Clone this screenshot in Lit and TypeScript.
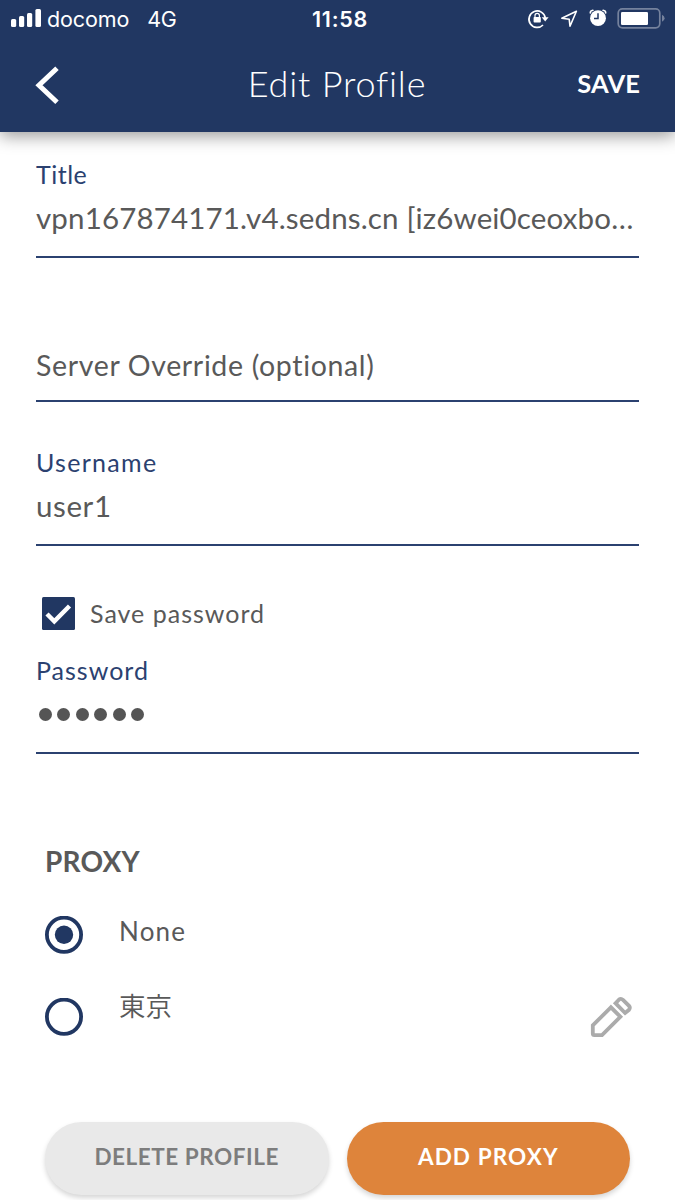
import { LitElement, html, css, svg } from "lit";
import { customElement, property } from "lit/decorators.js";

@customElement("status-bar")
class StatusBar extends LitElement {
  static styles = css`
    :host { display: grid; grid-template-columns: 1fr auto 1fr; align-items: center; height: 37px; padding: 0 10px 0 11px; color: #fff; font: 400 21.5px/26px Inter, sans-serif; }
    .left { display: flex; align-items: center; }
    .bars { width: 31px; height: 19px; margin-right: 5px; }
    .carrier { letter-spacing: -0.1px; margin-right: 18px; }
    .net { letter-spacing: -0.4px; }
    .time { font-weight: 600; letter-spacing: 0.75px; padding-left: 4px; }
    .right { display: flex; justify-content: flex-end; }
    .icons { width: 140px; height: 37px; }
  `;
  render() {
    return html`
      <div class="left">
        <svg class="bars" viewBox="0 0 31 19" fill="#fff">
          <rect x="0" y="10" width="5.2" height="8" rx="1.5" />
          <rect x="8" y="7" width="5.2" height="11" rx="1.5" />
          <rect x="16" y="4" width="5.2" height="14" rx="1.5" />
          <rect x="24.4" y="0" width="5.6" height="18" rx="1.5" />
        </svg>
        <span class="carrier">docomo</span><span class="net">4G</span>
      </div>
      <div class="time">11:58</div>
      <div class="right">
        <svg class="icons" viewBox="525 0 140 37" fill="none" stroke="#fff">
          <path d="M543 25A8.2 8.2 0 1 1 545.3 18" stroke-width="1.7" />
          <path d="M541.7 17.3h6.9l-3.4 4.2z" fill="#fff" stroke="none" />
          <rect x="533.6" y="17" width="7.2" height="5.6" rx="0.8" fill="#fff" stroke="none" />
          <path d="M535 17.4v-1.9a2.2 2.2 0 0 1 4.4 0v1.9" stroke-width="1.2" />
          <path d="M576.4 11.3L561.8 18.2L569.2 19.2L570 26.2Z" stroke-width="1.6" stroke-linejoin="round" />
          <circle cx="598" cy="18.2" r="7.9" fill="#fff" stroke="none" />
          <path d="M598 13.2v5.2h-4" stroke="#213762" stroke-width="1.5" />
          <path d="M590.3 12.9q0-2.2 2.6-2.6M605.7 12.9q0-2.2-2.6-2.6" stroke-width="1.6" stroke-linecap="round" />
          <rect x="618.2" y="8.8" width="41.6" height="19" rx="4.2" stroke="#75829d" stroke-width="1.7" />
          <rect x="621" y="12" width="27" height="13" rx="1.3" fill="#fff" stroke="none" />
          <path d="M662 14.8q2.6 1 2.6 3.5t-2.6 3.5z" fill="#75829d" stroke="none" />
        </svg>
      </div>
    `;
  }
}

@customElement("form-field")
class FormField extends LitElement {
  @property() label = "";
  @property() value = "";
  @property() placeholder = "";
  @property({ type: Number }) dots = 0;
  static styles = css`
    :host { display: flex; flex-direction: column; justify-content: flex-end; box-sizing: border-box; border-bottom: 2px solid #2b4170; padding-bottom: 18px; color: #595959; }
    .label { color: #2b4170; font-size: 25px; line-height: 30px; letter-spacing: var(--label-track, 0.5px); margin-bottom: 9px; }
    .value { font-size: 29.5px; line-height: 40px; white-space: nowrap; letter-spacing: var(--track, 0px); }
    .placeholder { font-size: 28.5px; line-height: 40px; letter-spacing: 0.65px; margin-bottom: -3px; }
    .dots { display: flex; align-items: center; gap: 5.4px; height: 40px; padding-left: 3px; }
    .dot { width: 13px; height: 13px; border-radius: 50%; background: #555; }
  `;
  render() {
    return html`
      ${this.label ? html`<div class="label">${this.label}</div>` : ""}
      ${this.placeholder ? html`<div class="placeholder">${this.placeholder}</div>` : ""}
      ${this.value ? html`<div class="value">${this.value}</div>` : ""}
      ${this.dots ? html`<div class="dots">${Array.from({ length: this.dots }, () => html`<span class="dot"></span>`)}</div>` : ""}
    `;
  }
}

@customElement("app-root")
class AppRoot extends LitElement {
  static styles = css`
    :host { display: block; height: 1200px; overflow: hidden; background: #fff; color: #595959; font-family: Lato, "Noto Sans CJK JP", sans-serif; }
    .header { height: 132px; background: #213762; box-shadow: 0 4px 16px rgba(0, 0, 0, 0.4); color: #fff; }
    .nav { display: grid; grid-template-columns: 1fr auto 1fr; align-items: center; height: 95px; padding: 0 35px 0 34px; }
    .back { width: 26px; height: 40px; }
    .title { font-size: 36px; line-height: 44px; font-weight: 300; letter-spacing: 0.8px; padding-bottom: 3px; }
    .save { justify-self: end; font-size: 25.5px; font-weight: 700; padding-bottom: 3px; letter-spacing: 0.1px; }
    .form { padding: 0 36px; }
    .first { height: 126px; --track: 0.15px; }
    .field { height: 144px; }
    .user { --track: 0.6px; --label-track: 1.3px; }
    .remember { display: flex; align-items: center; gap: 15px; height: 33px; margin-top: 51px; padding-left: 6px; font-size: 25px; letter-spacing: 1px; }
    .remember span { padding-bottom: 2px; }
    .check { width: 33px; height: 33px; }
    .password { height: 124px; --label-track: 1px; }
    .proxy { padding: 0 45px; }
    .heading { margin: 89px 0 0; font-size: 28px; line-height: 36px; font-weight: 700; letter-spacing: 0.2px; }
    .row { display: flex; align-items: center; height: 82px; font-size: 26px; }
    .heading + .row { margin-top: 15px; }
    .radio { width: 38px; height: 38px; margin-right: 36px; }
    .name { flex: 1; line-height: 34px; padding-bottom: 9px; letter-spacing: 1.2px; }
    .cjk { font: 350 26.5px/34px "Noto Sans CJK JP", sans-serif; padding-bottom: 24px; letter-spacing: 0; }
    .pencil { width: 44px; height: 44px; margin-right: -2px; }
    .actions { display: grid; grid-template-columns: 1fr 1fr; gap: 18px; padding: 64px 45px 0; }
    .btn { height: 73px; border: 0; border-radius: 37px; font: 700 22.5px/30px Lato, sans-serif; box-shadow: 0 3px 5px rgba(0, 0, 0, 0.16); padding: 0 0 3px; }
    .delete { background: #e9e9e9; color: #7d7d7d; letter-spacing: 0.55px; }
    .add { background: #de843b; color: #fff; letter-spacing: 1.1px; }
  `;
  radio(on: boolean) {
    return html`<svg class="radio" viewBox="0 0 38 38">
      <circle cx="19" cy="18.7" r="17.1" fill="none" stroke="#213762" stroke-width="3.8" />
      ${on ? svg`<circle cx="19" cy="18.7" r="9.2" fill="#213762" />` : ""}
    </svg>`;
  }
  render() {
    return html`
      <div class="header">
        <status-bar></status-bar>
        <div class="nav">
          <svg class="back" viewBox="0 0 26 40"><path d="M23 3.3L5 20.3L23 37.3" fill="none" stroke="#fff" stroke-width="5" /></svg>
          <div class="title">Edit Profile</div>
          <div class="save">SAVE</div>
        </div>
      </div>
      <div class="form">
        <form-field class="first" label="Title" value="vpn167874171.v4.sedns.cn [iz6wei0ceoxbo…"></form-field>
        <form-field class="field" placeholder="Server Override (optional)"></form-field>
        <form-field class="field user" label="Username" value="user1"></form-field>
        <div class="remember">
          <svg class="check" viewBox="0 0 33 33"><rect width="33" height="33" rx="1.5" fill="#213762" /><path d="M5 17L12.3 24.4L27.5 9" fill="none" stroke="#fff" stroke-width="4.4" /></svg>
          <span>Save password</span>
        </div>
        <form-field class="password" label="Password" dots="6"></form-field>
      </div>
      <div class="proxy">
        <h2 class="heading">PROXY</h2>
        <div class="row">${this.radio(true)}<span class="name">None</span></div>
        <div class="row">
          ${this.radio(false)}<span class="name cjk">東京</span>
          <svg class="pencil" viewBox="0 0 44 44" fill="none" stroke="#ababab" stroke-width="3.8">
            <path d="M22.9 12.3L4.8 30.4V38.6Q4.8 40.2 6.4 40.2H14L32.4 21.8Z" />
            <path d="M27.5 8.2L31 4.6Q33 3 35 4.8L41 10.8Q42.6 12.8 41 14.8L37.1 18Z" />
          </svg>
        </div>
      </div>
      <div class="actions">
        <button class="btn delete">DELETE PROFILE</button>
        <button class="btn add">ADD PROXY</button>
      </div>
    `;
  }
}
